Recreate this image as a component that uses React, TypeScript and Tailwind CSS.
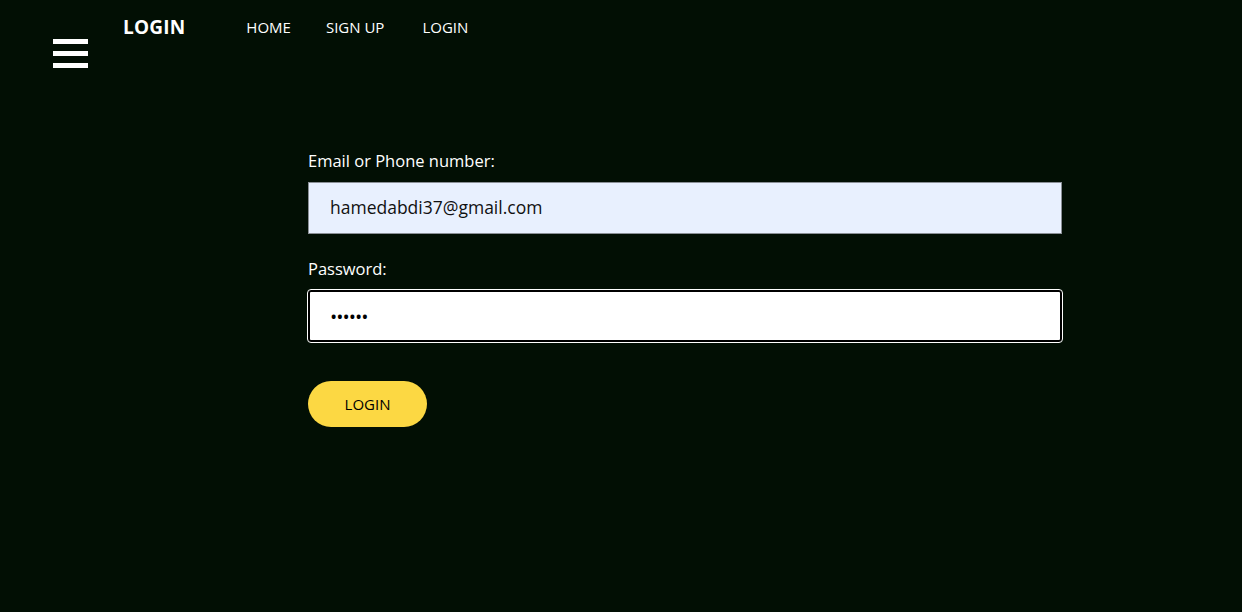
export default function App() {
  return (
    <div className="min-h-[612px] w-full bg-[#020f04] font-['Open_Sans',sans-serif] text-white">
      <header className="relative h-[90px]">
        <div className="absolute left-[53px] top-[39px] flex w-[35px] flex-col gap-[7px]">
          <span className="block h-[5px] bg-white" />
          <span className="block h-[5px] bg-white" />
          <span className="block h-[5px] bg-white" />
        </div>
        <nav className="flex items-center pl-[123px] pt-[13px]">
          <span className="text-[19px] font-bold tracking-[0.2px]">LOGIN</span>
          <ul className="ml-[61px] flex gap-[35px] text-[15px] leading-[22px]">
            <li>HOME</li>
            <li>SIGN UP</li>
            <li className="ml-[3px]">LOGIN</li>
          </ul>
        </nav>
      </header>

      <form className="ml-[308px] mt-[60px] flex w-[754px] flex-col">
        <label className="text-[16.5px] leading-[22px]">Email or Phone number:</label>
        <input
          readOnly
          value="hamedabdi37@gmail.com"
          className="mt-[10px] h-[52px] w-full border border-[#8a8f96] bg-[#e8f0fe] px-[21px] pb-[3px] text-[17.5px] text-[#111] outline-none"
        />

        <label className="mt-[24px] text-[16.5px] leading-[22px]">Password:</label>
        <div className="mt-[10px] flex h-[52px] w-full items-center rounded-[3px] border-2 border-black bg-white px-[21px] outline outline-1 outline-white">
          <span className="text-[14px] font-bold tracking-[1px] text-black">••••••</span>
        </div>

        <button
          type="button"
          className="mt-[39px] h-[46px] w-[119px] rounded-full bg-[#fcd843] text-[15px] text-black"
        >
          LOGIN
        </button>
      </form>
    </div>
  );
}
